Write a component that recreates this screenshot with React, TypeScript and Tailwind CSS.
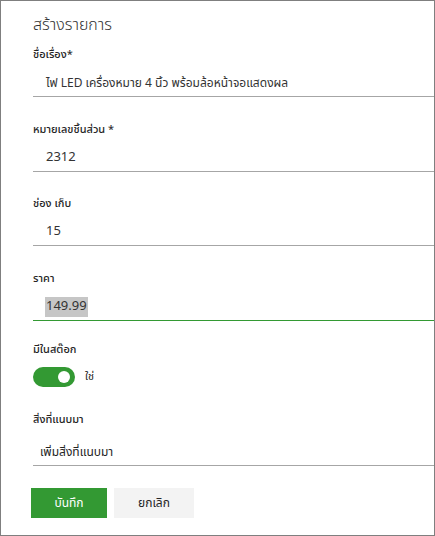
import React from 'react';

const font = { fontFamily: '"Noto Sans Thai", "Noto Sans", "Open Sans", sans-serif' };

type FieldProps = {
  label: string;
  star?: string;
  value: string;
  valueSize?: string;
  active?: boolean;
  className?: string;
};

function Label({ children }: { children: React.ReactNode }) {
  return (
    <div className="h-[20px] flex items-center text-[11px] font-medium text-[#252525] overflow-visible whitespace-nowrap">
      {children}
    </div>
  );
}

function Field({ label, star, value, valueSize = 'text-[13px]', active, className = '' }: FieldProps) {
  return (
    <div className={className}>
      <Label>
        {label}
        {star && <span className="whitespace-pre text-[#333333]">{star}</span>}
      </Label>
      <div
        className={
          'h-[32px] pt-[8px] pl-[13px] border-b flex items-start ' +
          (active ? 'border-[#339933]' : 'border-[#a6a6a6]')
        }
      >
        <span
          className={
            'h-[20px] flex items-center text-[#333333] whitespace-nowrap ' +
            valueSize +
            (active ? ' bg-[#c6c6c6] h-[18px] px-[1px] -ml-[1px]' : '')
          }
        >
          {value}
        </span>
      </div>
    </div>
  );
}

export default function App() {
  return (
    <div className="w-[435px] h-[536px] border border-[#7f7f7f] bg-white pl-[32px] overflow-hidden" style={font}>
      {/* Header */}
      <div className="h-[44px] pt-[12px]">
        <h1 className="h-[24px] flex items-center text-[16px] font-light text-[#333333] whitespace-nowrap">สร้างรายการ</h1>
      </div>

      <Field label="ชื่อเรื่อง" star="*" value="ไฟ LED เครื่องหมาย 4 นิ้ว พร้อมล้อหน้าจอแสดงผล" valueSize="text-[12px]" />
      <Field className="mt-[23px]" label="หมายเลขชิ้นส่วน" star=" *" value="2312" />
      <Field className="mt-[22px]" label="ช่อง เก็บ" value="15" />
      <Field className="mt-[23px]" label="ราคา" value="149.99" active />

      {/* Stock toggle */}
      <div className="mt-[19px]">
        <Label>มีในสต๊อก</Label>
        <div className="mt-[7px] h-[20px] flex items-center gap-[10px]">
          <button className="w-[42px] h-[20px] rounded-full bg-[#339933] flex items-center justify-end pr-[5px]">
            <span className="w-[12px] h-[12px] rounded-full bg-white" />
          </button>
          <span className="text-[11px] text-[#252525]">ใช่</span>
        </div>
      </div>

      {/* Attachments */}
      <div className="mt-[23px]">
        <Label>สิ่งที่แนบมา</Label>
        <div className="h-[36px] pt-[12px] pl-[7px] border-b border-[#a6a6a6]">
          <span className="h-[20px] flex items-center text-[12px] text-[#252525] whitespace-nowrap">เพิ่มสิ่งที่แนบมา</span>
        </div>
      </div>

      {/* Actions */}
      <div className="mt-[22px] -ml-[2px] flex gap-[7px]">
        <button className="w-[76px] h-[30px] bg-[#339933] text-white text-[12px]">บันทึก</button>
        <button className="w-[80px] h-[30px] bg-[#f3f3f3] text-[#252525] text-[12px]">ยกเลิก</button>
      </div>
    </div>
  );
}
